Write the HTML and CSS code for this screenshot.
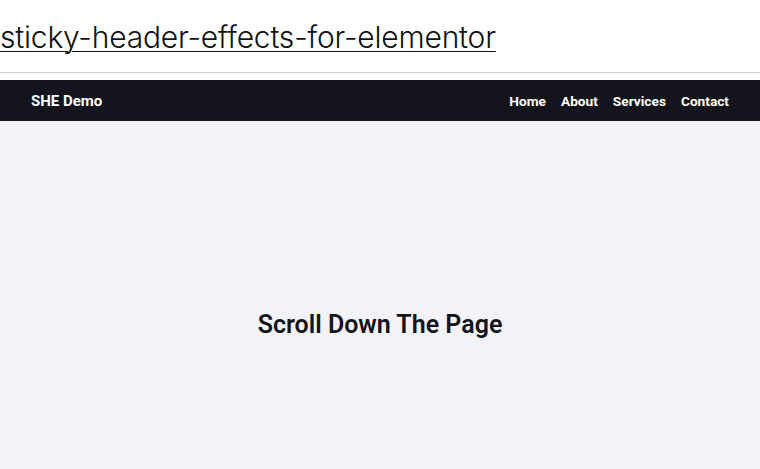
FILE: index.html
```html
<!DOCTYPE html>
<html>
<head>
<meta charset="utf-8">
<link rel="stylesheet" href="styles.css">
</head>
<body>
<div class="title-wrap">
  <a class="title" href="#">sticky-header-effects-for-elementor</a>
</div>
<hr class="sep">
<header class="nav">
  <div class="brand">SHE Demo</div>
  <nav class="links">
    <a href="#">Home</a>
    <a href="#">About</a>
    <a href="#">Services</a>
    <a href="#">Contact</a>
  </nav>
</header>
<main class="hero">
  <h1>Scroll Down The Page</h1>
</main>
</body>
</html>
```
FILE: styles.css
```css
html, body {
  margin: 0;
  padding: 0;
  height: 100%;
}
body {
  display: flex;
  flex-direction: column;
  background: #ffffff;
  font-family: Roboto, "Liberation Sans", sans-serif;
}
.title-wrap {
  padding-top: 17px;
  height: 55px;
  box-sizing: border-box;
}
.title {
  font-family: Inter, "Liberation Sans", sans-serif;
  font-weight: 300;
  font-size: 30px;
  letter-spacing: -0.2px;
  line-height: 40px;
  color: #111111;
  text-decoration: underline;
  text-decoration-thickness: 1px;
  text-underline-offset: 3px;
}
.sep {
  margin: 17px 0 7px 0;
  border: 0;
  height: 1px;
  background: #cfcfcf;
}
.nav {
  height: 41px;
  background: #13141c;
  display: flex;
  align-items: center;
  justify-content: space-between;
  padding: 0 31px;
}
.brand {
  color: #ffffff;
  font-weight: 700;
  font-size: 15px;
}
.links {
  display: flex;
  gap: 15px;
}
.links a {
  color: #ffffff;
  font-weight: 700;
  font-size: 13.7px;
  text-decoration: none;
}
.hero {
  flex: 1;
  background: #f3f2f7;
  display: flex;
  flex-direction: column;
  align-items: center;
  padding-top: 189px;
}
.hero h1 {
  margin: 0;
  font-size: 25px;
  line-height: 30px;
  font-weight: 600;
  color: #13141c;
}
```
